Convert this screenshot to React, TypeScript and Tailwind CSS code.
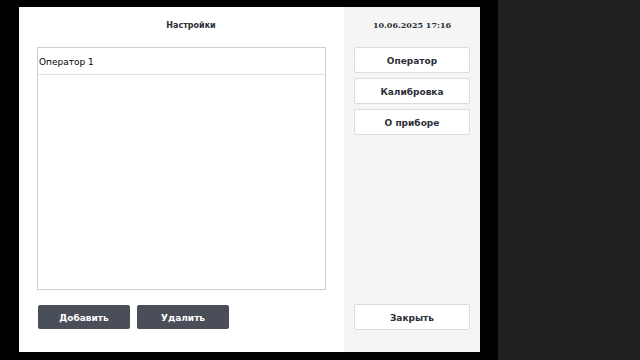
const sans = { fontFamily: '"DejaVu Sans", Verdana, sans-serif' };
const serif = { fontFamily: '"DejaVu Serif", "Liberation Serif", serif' };

function SideButton({ label }: { label: string }) {
  return (
    <button
      type="button"
      className="h-[26px] w-full rounded-[2px] border border-[#dcdcdc] bg-white pt-[3px] text-[9px] font-bold text-[#2b2f38]"
      style={sans}
    >
      {label}
    </button>
  );
}

function DarkButton({ label }: { label: string }) {
  return (
    <button
      type="button"
      className="h-[24px] w-[92px] rounded-[2px] bg-[#4a4e58] pt-[3px] text-[9px] font-bold text-white"
      style={sans}
    >
      {label}
    </button>
  );
}

export default function App() {
  const operators = ["Оператор 1"];

  return (
    <div className="flex h-[360px] w-[640px] bg-black">
      <div className="flex w-[498px] pl-[19px] pt-[7px]">
        <div className="flex h-[345px] w-[461px] bg-white">
          {/* левая часть */}
          <div className="flex w-[325px] flex-col pl-[18px]">
            <div
              className="flex h-[34px] items-center justify-center pl-[1px] pt-[3px] text-[8px] font-bold text-[#2b2f38]"
              style={sans}
            >
              Настройки
            </div>
            <div className="mt-[6px] h-[243px] w-[289px] border border-[#cfcfcf] bg-white">
              {operators.map((op) => (
                <div
                  key={op}
                  className="flex h-[27px] items-center border-b border-[#e2e2e2] px-[1px] pt-[3px] text-[9px] text-black"
                  style={sans}
                >
                  {op}
                </div>
              ))}
            </div>
            <div className="mt-[15px] flex gap-[7px] pl-[1px]">
              <DarkButton label="Добавить" />
              <DarkButton label="Удалить" />
            </div>
          </div>

          {/* правая часть */}
          <div className="flex w-[136px] flex-col bg-[#f5f5f5] px-[10px]">
            <div
              className="flex h-[34px] items-center justify-center pt-[1px] text-[8px] font-bold text-[#2b2f38]"
              style={serif}
            >
              10.06.2025 17:16
            </div>
            <div className="mt-[6px] flex flex-col gap-[5px]">
              <SideButton label="Оператор" />
              <SideButton label="Калибровка" />
              <SideButton label="О приборе" />
            </div>
            <div className="mt-auto mb-[22px]">
              <SideButton label="Закрыть" />
            </div>
          </div>
        </div>
      </div>
      <div className="flex-1 bg-[#212121]" />
    </div>
  );
}
